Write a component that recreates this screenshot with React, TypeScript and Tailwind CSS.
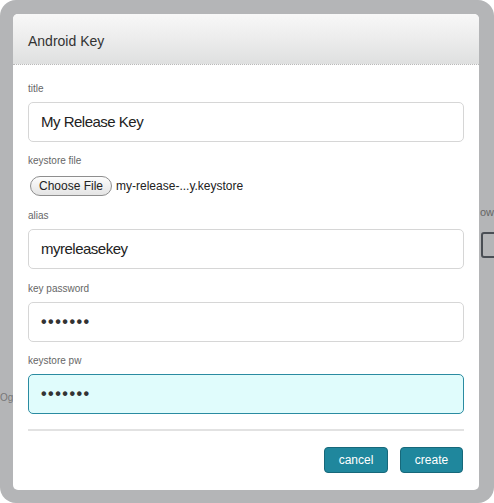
import React from 'react';

const font = { fontFamily: '"Liberation Sans", Arial, sans-serif' };

const Label = ({ children, className = '' }: { children: React.ReactNode; className?: string }) => (
  <div className={`h-[14px] text-[10px] leading-[14px] text-[#666] ${className}`}>{children}</div>
);

const Field = ({
  value,
  focused = false,
  password = false,
  className = '',
}: {
  value: string;
  focused?: boolean;
  password?: boolean;
  className?: string;
}) => (
  <div
    className={`flex h-[40px] items-center rounded-[5px] border pl-[12px] ${
      focused ? 'border-[#2a8ba1] bg-[#e0fcfc]' : 'border-[#d6d6d6] bg-white'
    } ${className}`}>
    {password ? (
      <span className="text-[16px] font-bold tracking-[1.5px] text-[#333]">{value}</span>
    ) : (
      <span className="text-[15px] tracking-[-0.5px] text-[#222]">{value}</span>
    )}
  </div>
);

const App = () => {
  return (
    <div className="h-[503px] w-[494px] overflow-hidden bg-white" style={font}>
      <div className="relative h-full w-full rounded-[16px] bg-[#b4b5b7] pb-[13px] pl-[13px] pr-[15px] pt-[14px]">
        {/* bits of the page behind the overlay */}
        <span className="absolute left-[480px] top-[204px] text-[11px] text-[#666]">ow</span>
        <div className="absolute left-[481px] top-[232px] h-[26px] w-[16px] rounded-[3px] border-2 border-[#4a4e54]" />
        <span className="absolute left-0 top-[390px] text-[10px] text-[#777]">Og</span>

        <div className="relative flex h-full flex-col rounded-[5px] bg-white">
          <div className="flex h-[51px] items-center rounded-t-[5px] border-b border-dotted border-[#b9b9b9] bg-gradient-to-b from-[#f8f8f8] via-[#ececec] to-[#dfe0e0] px-[15px] pt-[4px]">
            <span className="text-[14px] text-[#333]">Android Key</span>
          </div>

          <div className="flex flex-col px-[15px] pt-[17px]">
            <Label>title</Label>
            <Field value="My Release Key" className="mt-[6px]" />

            <Label className="mt-[12px]">keystore file</Label>
            <div className="mt-[8px] flex items-center gap-[4px]">
              <button className="ml-[2px] h-[20px] rounded-full border border-[#8e8e8e] bg-gradient-to-b from-[#fdfdfd] to-[#e4e4e4] px-[8px] text-[12px] leading-[18px] text-[#222]">
                Choose File
              </button>
              <span className="text-[12px] text-[#222]">my-release-...y.keystore</span>
            </div>

            <Label className="mt-[13px]">alias</Label>
            <Field value="myreleasekey" className="mt-[6px]" />

            <Label className="mt-[13px]">key password</Label>
            <Field value="•••••••" password className="mt-[6px]" />

            <Label className="mt-[12px]">keystore pw</Label>
            <Field value="•••••••" password focused className="mt-[6px]" />

            <div className="mt-[15px] h-[2px] bg-[#e2e2e2]" />

            <div className="mt-[16px] flex justify-end gap-[12px] pr-[1px]">
              <button className="h-[26px] w-[64px] rounded-[4px] border border-[#17687a] bg-[#1f879d] text-[12px] text-white">
                cancel
              </button>
              <button className="h-[26px] w-[63px] rounded-[4px] border border-[#17687a] bg-[#1f879d] text-[12px] text-white">
                create
              </button>
            </div>
          </div>
        </div>
      </div>
    </div>
  );
};

export default App;
